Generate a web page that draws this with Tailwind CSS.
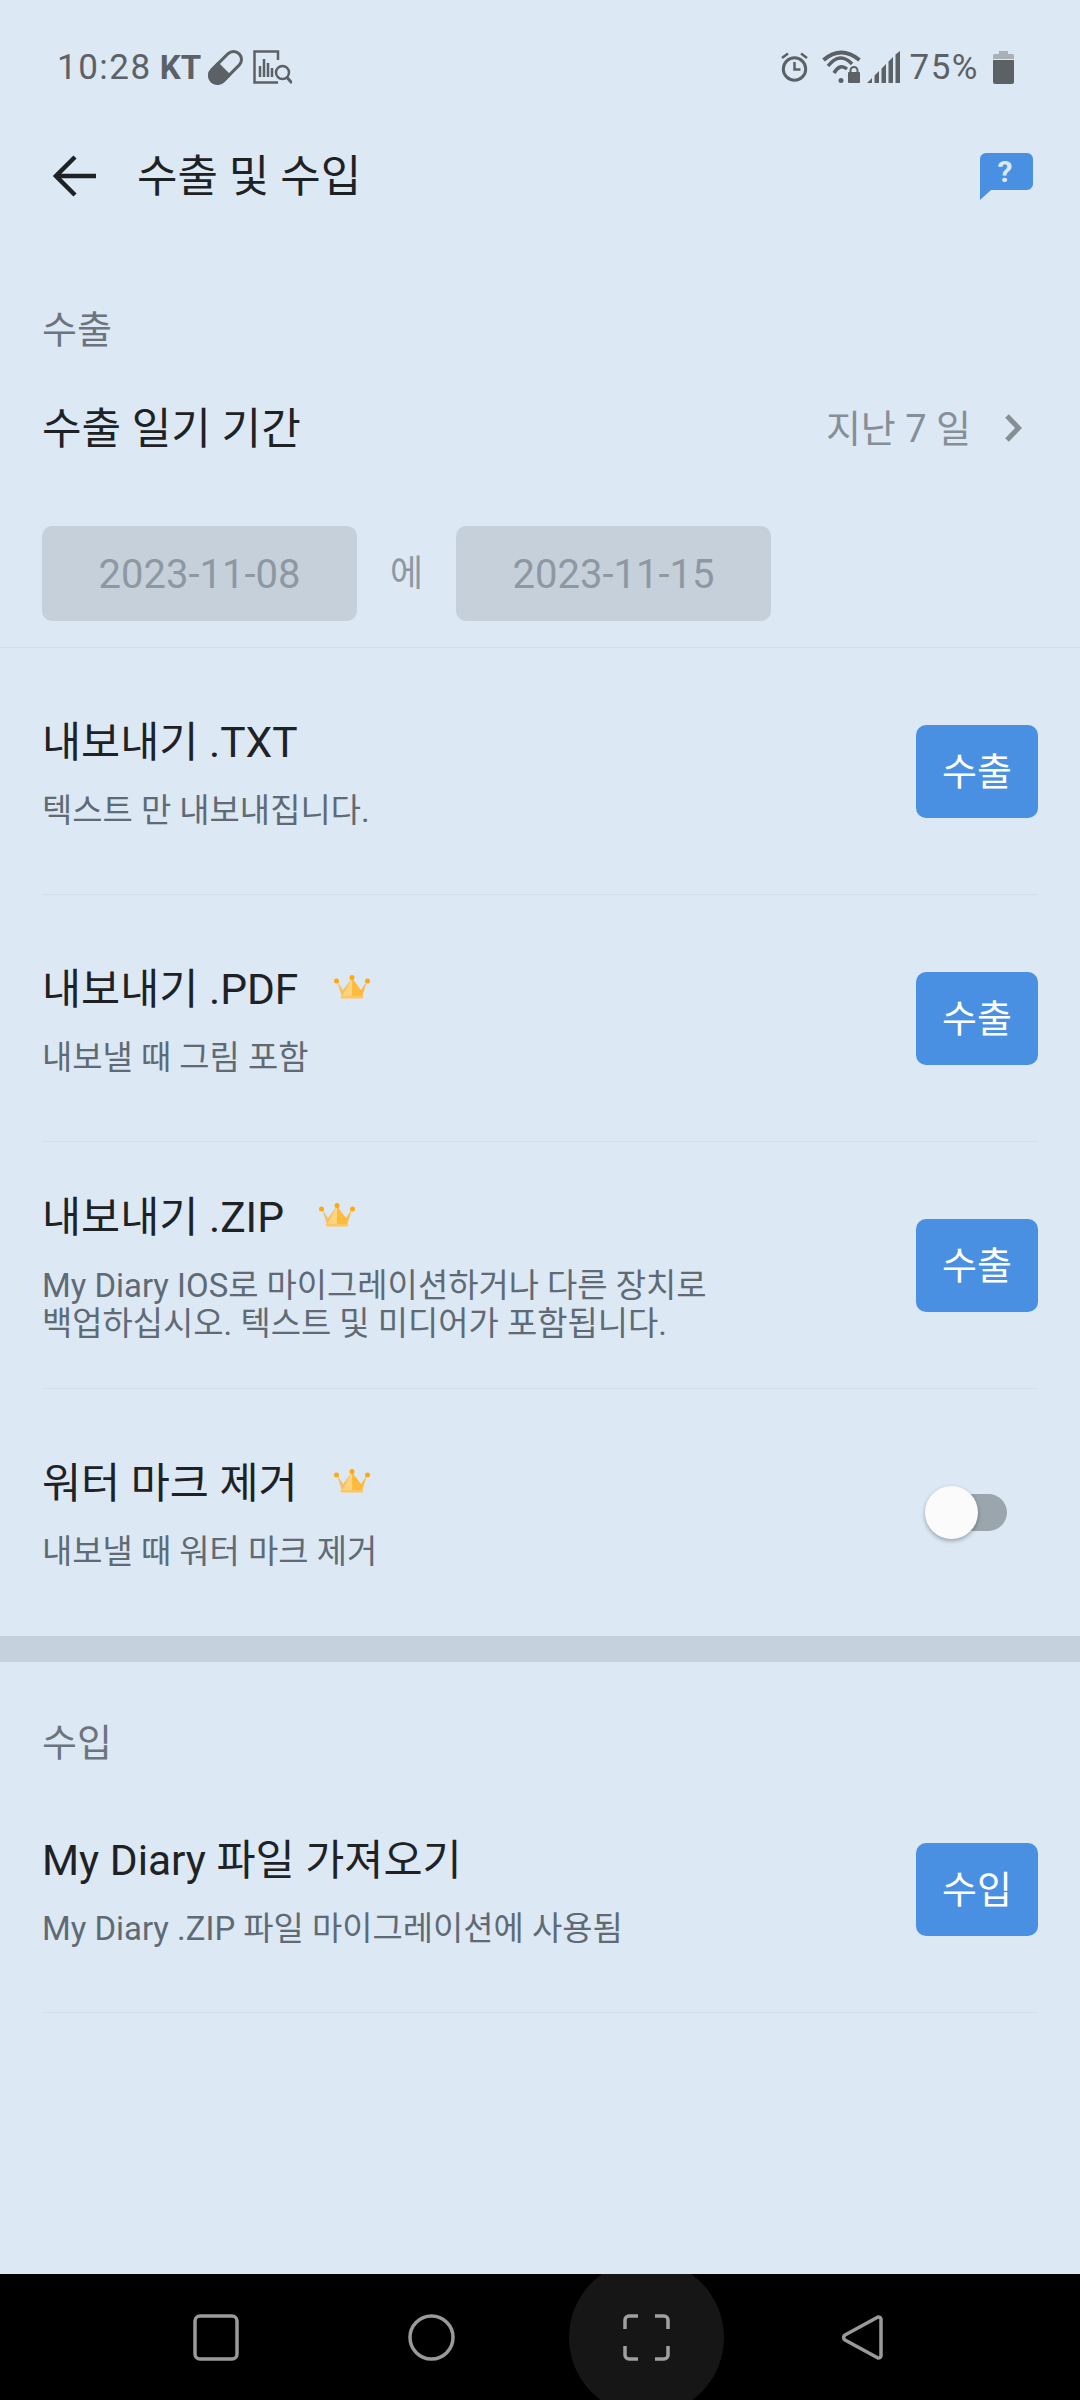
<!DOCTYPE html>
<html lang="ko">
<head>
<meta charset="utf-8">
<title>수출 및 수입</title>
<script src="https://cdn.jsdelivr.net/npm/@tailwindcss/browser@4"></script>
</head>
<body class="font-['Roboto','Noto_Sans_CJK_KR',sans-serif]">
<div class="w-[1080px] h-[2400px] flex flex-col bg-[#dce8f4] overflow-hidden">

  <!-- status bar -->
  <div class="h-[134px] shrink-0 flex items-center justify-between pl-[57px] pr-[66px] text-[#5c6166]">
    <div class="flex items-center">
      <span class="text-[35px] tracking-[1.5px] leading-none">10:28</span>
      <span class="text-[33px] font-bold ml-[8px] leading-none">KT</span>
      <svg class="ml-[7px]" width="35" height="35" viewBox="0 0 35 35">
        <g transform="rotate(-45 17.5 17.5)">
          <rect x="-1.800" y="9.500" width="38.600" height="16" rx="8" fill="none" stroke="#5c6166" stroke-width="3"/>
          <path d="M16 8H6.200a9.500 9.500 0 0 0 0 19H16z" fill="#5c6166"/>
        </g>
      </svg>
      <svg class="ml-[10px]" width="39" height="34" viewBox="0 0 39 34" fill="none" stroke="#5c6166">
        <path d="M25 10V1.500H1.500V32.500H25" stroke-width="2.500"/>
        <path d="M7 27V16M11 27V9M15 27V13M19 27V18" stroke-width="2.500"/>
        <circle cx="29.500" cy="22.500" r="6.500" stroke-width="2.500"/>
        <path d="M34 27.500L39 33" stroke-width="3"/>
      </svg>
    </div>
    <div class="flex items-center">
      <svg width="27" height="30" viewBox="0 0 27 30" fill="none" stroke="#5c6166" stroke-width="3">
        <circle cx="13.500" cy="17" r="11.200"/>
        <path d="M13.500 10v7.500h6M1 6l6-4.500M26 6l-6-4.500" stroke-width="2.500"/>
      </svg>
      <svg class="ml-[14px]" width="39" height="34" viewBox="0 0 39 34" fill="none" stroke="#5c6166">
        <path d="M1.500 10Q19 -5 37.500 10" stroke-width="4"/>
        <path d="M6 16Q18 1 30 14" stroke-width="3.500"/>
        <path d="M12 23Q18 13 25 19" stroke-width="3.500"/>
        <circle cx="19" cy="30.500" r="2.500" fill="#5c6166" stroke="none"/>
        <rect x="26" y="22" width="12" height="11" rx="1" fill="#5c6166" stroke="none"/>
        <path d="M28.500 22.500v-2a3.500 3.500 0 0 1 7 0v2" stroke-width="2"/>
      </svg>
      <svg class="ml-[6px]" width="33" height="32" viewBox="0 0 33 32" fill="#5c6166">
        <path d="M0 32L5 27V32zM7.500 32V24.500L12 20V32zM14.500 32V17.500L19 13V32zM21.500 32V10.500L26 6V32zM28.500 32V3.500L33 0V32z"/>
      </svg>
      <span class="text-[35px] tracking-[1.5px] leading-none ml-[10px]">75%</span>
      <svg class="ml-[14px]" width="21" height="33" viewBox="0 0 21 33">
        <path d="M6 0h9v3h4.500a1.500 1.500 0 0 1 1.500 1.500V8H0V4.500A1.500 1.500 0 0 1 1.500 3H6z" fill="#a9b0b6"/>
        <path d="M0 9h21v22a2 2 0 0 1-2 2H2a2 2 0 0 1-2-2z" fill="#5c6166"/>
      </svg>
    </div>
  </div>

  <!-- header -->
  <div class="h-[84px] shrink-0 flex items-center justify-between pl-[53px] pr-[47px]">
    <div class="flex items-center">
      <svg width="43" height="42" viewBox="0 0 43 42" fill="none" stroke="#1f2225" stroke-width="4.500">
        <path d="M43 21H3M22 2L3 21L22 40"/>
      </svg>
      <h1 class="ml-[41px] pt-[2px] text-[44px] leading-none text-[#1f2225]">수출 및 수입</h1>
    </div>
    <svg width="53" height="47" viewBox="0 0 53 47">
      <path d="M6 0h41a6 6 0 0 1 6 6v25a6 6 0 0 1-6 6H11L0 47V6a6 6 0 0 1 6-6z" fill="#4a90e2"/>
      <text x="25" y="29" text-anchor="middle" font-size="30" font-weight="700" fill="#dce8f4" font-family="Roboto">?</text>
    </svg>
  </div>

  <!-- export -->
  <div class="mt-[88px] h-[46px] pl-[42px] pt-[2px] flex items-center text-[38px] text-[#6c757d]">수출</div>
  <div class="mt-[39px] h-[76px] pl-[42px] pr-[58px] flex items-center justify-between">
    <span class="text-[43px] text-[#1f2225]">수출 일기 기간</span>
    <div class="flex items-center text-[38px] text-[#868f98]">
      <span>지난 7 일</span>
      <svg class="ml-[33px] -mt-[2px]" width="18" height="28" viewBox="0 0 18 28" fill="none" stroke="#878f96" stroke-width="5">
        <path d="M3 2L14.500 14L3 26"/>
      </svg>
    </div>
  </div>
  <div class="mt-[59px] h-[95px] pl-[42px] flex items-center">
    <div class="w-[315px] h-full pt-[2px] rounded-[10px] bg-[#c5d0db] flex items-center justify-center text-[40px] text-[#8e98a2]">2023-11-08</div>
    <span class="w-[99px] text-center text-[36px] text-[#8e98a2]">에</span>
    <div class="w-[315px] h-full pt-[2px] rounded-[10px] bg-[#c5d0db] flex items-center justify-center text-[40px] text-[#8e98a2]">2023-11-15</div>
  </div>
  <div class="mt-[26px] border-t border-[#d3e0ec]"></div>

  <div class="mx-[42px]">
    <div class="h-[247px] flex items-center justify-between border-b border-[#d3e0ec]">
      <div>
        <div class="h-[60px] flex items-center text-[42.5px] text-[#1f2225]">내보내기 .TXT</div>
        <p class="mt-[19px] text-[32.9px] leading-[38px] text-[#5f6a74]">텍스트 만 내보내집니다.</p>
      </div>
      <button class="w-[122px] h-[93px] pt-[3px] rounded-[10px] bg-[#4a90e2] text-white text-[38px]">수출</button>
    </div>
    <div class="h-[247px] flex items-center justify-between border-b border-[#d3e0ec]">
      <div>
        <div class="h-[60px] flex items-center text-[42.5px] text-[#1f2225]">내보내기 .PDF
          <svg class="ml-[36px] -mt-[6px]" width="36" height="24" viewBox="0 0 36 24">
            <path d="M3 6L8 22H18V3L9 15z" fill="#f6c068"/>
            <path d="M33 6L28 22H18V3L27 15z" fill="#ffbb3e"/>
            <path d="M18 3L8 22H18z" fill="#ffd47e"/>
            <path d="M7 21h22a1.500 1.500 0 0 1-1.500 2.500h-19A1.500 1.500 0 0 1 7 21z" fill="#ffc65e"/>
            <circle cx="2.500" cy="6" r="2.500" fill="#ffa90a"/><circle cx="18" cy="2.500" r="2.500" fill="#ffa90a"/><circle cx="33.500" cy="6" r="2.500" fill="#ffa90a"/>
          </svg>
        </div>
        <p class="mt-[19px] text-[32.9px] leading-[38px] text-[#5f6a74]">내보낼 때 그림 포함</p>
      </div>
      <button class="w-[122px] h-[93px] pt-[3px] rounded-[10px] bg-[#4a90e2] text-white text-[38px]">수출</button>
    </div>
    <div class="h-[247px] flex items-center justify-between border-b border-[#d3e0ec]">
      <div>
        <div class="h-[60px] flex items-center text-[42.5px] text-[#1f2225]">내보내기 .ZIP
          <svg class="ml-[35px] -mt-[6px]" width="36" height="24" viewBox="0 0 36 24">
            <path d="M3 6L8 22H18V3L9 15z" fill="#f6c068"/>
            <path d="M33 6L28 22H18V3L27 15z" fill="#ffbb3e"/>
            <path d="M18 3L8 22H18z" fill="#ffd47e"/>
            <path d="M7 21h22a1.500 1.500 0 0 1-1.500 2.500h-19A1.500 1.500 0 0 1 7 21z" fill="#ffc65e"/>
            <circle cx="2.500" cy="6" r="2.500" fill="#ffa90a"/><circle cx="18" cy="2.500" r="2.500" fill="#ffa90a"/><circle cx="33.500" cy="6" r="2.500" fill="#ffa90a"/>
          </svg>
        </div>
        <p class="mt-[19px] text-[32.9px] leading-[38px] text-[#5f6a74]">My Diary IOS로 마이그레이션하거나 다른 장치로<br>백업하십시오. 텍스트 및 미디어가 포함됩니다.</p>
      </div>
      <button class="w-[122px] h-[93px] pt-[3px] rounded-[10px] bg-[#4a90e2] text-white text-[38px]">수출</button>
    </div>
    <div class="h-[247px] flex items-center justify-between">
      <div>
        <div class="h-[60px] flex items-center text-[42.5px] text-[#1f2225]">워터 마크 제거
          <svg class="ml-[36px] -mt-[6px]" width="36" height="24" viewBox="0 0 36 24">
            <path d="M3 6L8 22H18V3L9 15z" fill="#f6c068"/>
            <path d="M33 6L28 22H18V3L27 15z" fill="#ffbb3e"/>
            <path d="M18 3L8 22H18z" fill="#ffd47e"/>
            <path d="M7 21h22a1.500 1.500 0 0 1-1.500 2.500h-19A1.500 1.500 0 0 1 7 21z" fill="#ffc65e"/>
            <circle cx="2.500" cy="6" r="2.500" fill="#ffa90a"/><circle cx="18" cy="2.500" r="2.500" fill="#ffa90a"/><circle cx="33.500" cy="6" r="2.500" fill="#ffa90a"/>
          </svg>
        </div>
        <p class="mt-[19px] text-[32.9px] leading-[38px] text-[#5f6a74]">내보낼 때 워터 마크 제거</p>
      </div>
      <div class="relative w-[62px] h-[37px] mr-[31px] rounded-full bg-[#9aa5ae]">
        <div class="absolute left-[-20px] top-[-8px] size-[53px] rounded-full bg-[#fbfbfb] shadow-[0_2px_4px_rgba(0,0,0,0.3)]"></div>
      </div>
    </div>
  </div>

  <div class="h-[26px] shrink-0 bg-[#c5d1dc]"></div>

  <!-- import -->
  <div class="mt-[57px] h-[46px] pl-[42px] pt-[2px] flex items-center text-[38px] text-[#6c757d]">수입</div>
  <div class="mx-[42px] mt-[1px] h-[247px] flex items-center justify-between border-b border-[#d3e0ec]">
    <div>
      <div class="h-[60px] flex items-center text-[42.5px] text-[#1f2225]">My Diary 파일 가져오기</div>
      <p class="mt-[19px] text-[32.9px] leading-[38px] text-[#5f6a74]">My Diary .ZIP 파일 마이그레이션에 사용됨</p>
    </div>
    <button class="w-[122px] h-[93px] pt-[3px] rounded-[10px] bg-[#4a90e2] text-white text-[38px]">수입</button>
  </div>

  <!-- nav bar -->
  <div class="relative mt-auto h-[126px] shrink-0 bg-black overflow-hidden grid grid-cols-[repeat(4,215.5px)] pl-[108px] items-center justify-items-center">
    <svg width="46" height="47" viewBox="0 0 46 47" fill="none" stroke="#9a9a9a" stroke-width="3.500">
      <rect x="2" y="2" width="42" height="43" rx="5"/>
    </svg>
    <svg width="47" height="47" viewBox="0 0 47 47" fill="none" stroke="#9a9a9a" stroke-width="3.500">
      <circle cx="23.500" cy="23.500" r="21.500"/>
    </svg>
    <div class="relative size-[47px]">
      <div class="absolute left-[-54px] top-[-54px] size-[155px] rounded-full bg-[#161616]"></div>
      <svg class="relative" width="47" height="47" viewBox="0 0 47 47" fill="none" stroke="#a0a0a0" stroke-width="3.500">
        <path d="M2 15V6a4 4 0 0 1 4-4h9M32 2h9a4 4 0 0 1 4 4v9M2 32v9a4 4 0 0 0 4 4h9M32 45h9a4 4 0 0 0 4-4v-9"/>
      </svg>
    </div>
    <svg width="41" height="47" viewBox="0 0 41 47" fill="none" stroke="#9a9a9a" stroke-width="3.500">
      <path d="M36 3L3 21a3 3 0 0 0 0 5L36 44a3 3 0 0 0 3-2V5a3 3 0 0 0-3-2z" stroke-linejoin="round"/>
    </svg>
  </div>
</div>
</body>
</html>
